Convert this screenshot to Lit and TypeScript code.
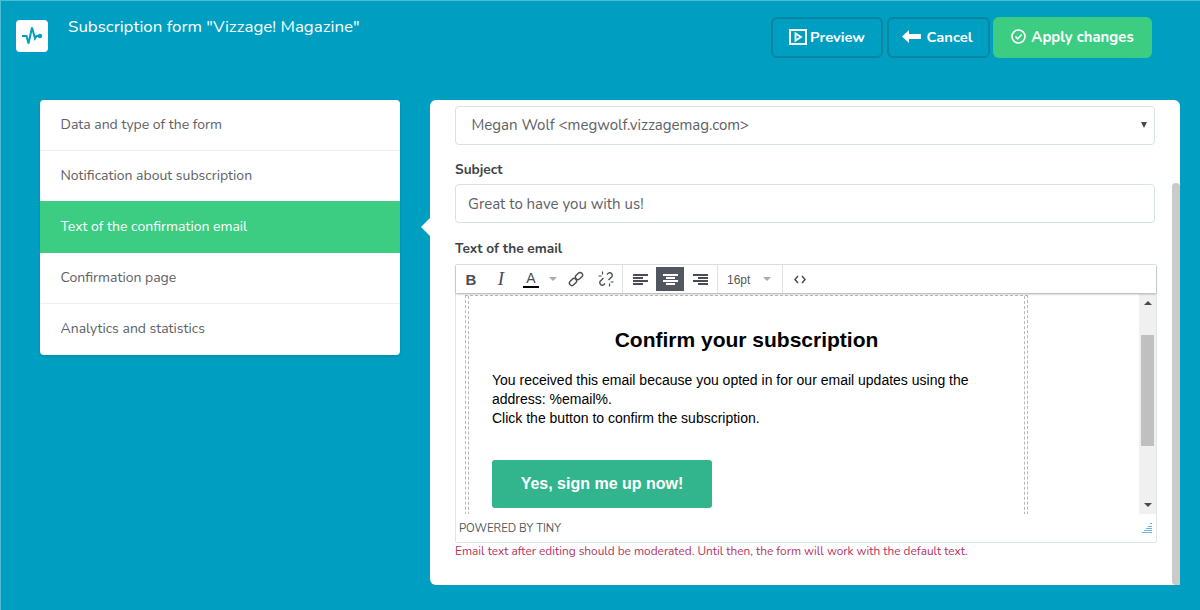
import { LitElement, html, css } from "lit";
import { customElement } from "lit/decorators.js";

@customElement("app-root")
export class AppRoot extends LitElement {
  static styles = css`
    :host { display: block; width: 1200px; height: 610px; overflow: hidden; font-family: "Nunito", "Lato", "Open Sans", sans-serif; }
    * { box-sizing: border-box; }
    .page { width: 1200px; height: 610px; background: #009fc2; display: flex; flex-direction: column; border-left: 1px solid #4fbcd5; border-top: 1px solid #4fbcd5; }
    .head { display: flex; height: 99px; padding: 16px 48px 0 15px; }
    .logo { width: 32px; height: 32px; margin-top: 3px; background: #fff; border-radius: 4px; display: flex; align-items: center; justify-content: center; }
    .title { margin-left: 20px; color: #fff; font-size: 16.9px; line-height: 20px; flex: 1; }
    .btns { display: flex; gap: 4px; }
    .btn { height: 41px; padding-bottom: 2px; border-radius: 6px; border: 2px solid #0a84a3; color: #fff; font-weight: 700; font-size: 14.7px; display: flex; align-items: center; justify-content: center; gap: 3px; }
    .preview { width: 112px; }
    .cancel { width: 103px; gap: 6px; padding-right: 3px; }
    .apply { width: 159px; border: 0; background: #3ccd82; gap: 5px; margin-left: -1px; font-size: 14.9px; }
    .main { display: flex; padding-left: 39px; gap: 30px; align-items: flex-start; }
    .side { width: 360px; background: #fff; border-radius: 4px; overflow: hidden; box-shadow: 0 1px 3px rgba(0,0,0,.15); }
    .item { height: 51px; padding: 0 21px 2px 20.500px; display: flex; align-items: center; font-size: 14px; color: #5d6166; border-bottom: 1px solid #eceeee; }
    .item:last-child { border-bottom: 0; height: 51px; }
    .item.on { background: #3ccd82; color: #fff; border-bottom: 0; height: 52px; margin-top: -1px; }
    .panel { position: relative; width: 750px; height: 485px; background: #fff; border-radius: 6px; padding: 6px 25px 0; }
    .arrow { position: absolute; left: -9px; top: 118px; width: 0; height: 0; border-style: solid; border-width: 9px 9px 9px 0; border-color: transparent #fff transparent transparent; }
    .bar { position: absolute; right: 0; top: 83px; bottom: 0; width: 8px; background: #cacaca; border-radius: 4px 4px 0 4px; }
    .field { height: 39px; width: 700px; border: 1px solid #d6e3e1; border-radius: 4px; display: flex; align-items: center; font-size: 15px; color: #5d6166; padding: 0 12px; }
    .select { padding-left: 15.500px; justify-content: space-between; padding-right: 7px; padding-bottom: 1px; }
    .caret { width: 0; height: 0; border-style: solid; border-width: 6px 3px 0; border-color: #4a4a4a transparent transparent; }
    label { display: block; font-size: 13.7px; font-weight: 700; color: #3f4347; line-height: 20px; }
    .l1 { margin-top: 15px; margin-bottom: 4px; }
    .l2 { margin-top: 16px; margin-bottom: 5px; }
    .editor { width: 702px; height: 279px; border: 1px solid #dde6e6; border-radius: 2px; display: flex; flex-direction: column; position: relative; }
    .tools { height: 28px; flex: none; display: flex; align-items: stretch; box-shadow: 0 1px 2px rgba(0,0,0,.35); background: #fff; position: relative; z-index: 1; color: #4a4d52; margin-bottom: 1px; }
    .grp { display: flex; align-items: center; border-right: 1px solid #dde2e2; }
    .g1 { width: 167px; }
    .g2 { width: 95px; padding-left: 3px; }
    .g3 { width: 65px; padding-left: 9px; }
    .g4 { border-right: 0; padding-left: 2px; }
    .t { width: 30px; height: 24px; display: flex; align-items: center; justify-content: center; font-family: "Liberation Sans", sans-serif; font-size: 14px; }
    .t.b { font-weight: 700; font-size: 15px; }
    .t.i { font-style: italic; font-family: "Liberation Serif", serif; font-size: 19px; }
    .t.on { background: #52565e; color: #fff; width: 28px; }
    .g2 .t { width: 28px; }
    .g2 .t + .t { margin-left: 2px; }
    .t.a { flex-direction: column; line-height: 13px; font-size: 14px; font-weight: 400; padding-top: 2px; }
    .t.a i { display: block; width: 16px; height: 2px; background: #000; margin-top: 1px; }
    .tri { width: 0; height: 0; border-style: solid; border-width: 4px 4px 0; border-color: #a9adb0 transparent transparent; }
    .tri1 { margin: 0 4px 0 3px; }
    .tri2 { margin-left: 13px; }
    .sz { font-family: "Liberation Sans", sans-serif; font-size: 12px; color: #53575c; width: 23px; padding-top: 1px; }
    .body { height: 220px; flex: none; display: flex; overflow: hidden; }
    .doc { width: 683px; padding-left: 9px; font-family: "Liberation Sans", sans-serif; overflow: hidden; }
    .outer { width: 563px; height: 260px; border: 1px dashed #b9b9b9; border-bottom: 0; padding: 0 2px; margin-top: 1px; }
    .inner { height: 100%; border-left: 1px dashed #b9b9b9; border-right: 1px dashed #b9b9b9; padding: 32px 23px 0; color: #000; }
    h1 { margin: 0; font-size: 21px; line-height: 24px; text-align: center; font-weight: 700; }
    p { margin: 19px 0 0; font-size: 14px; line-height: 19px; }
    .cta { margin-top: 32px; width: 220px; height: 48px; background: #32b58c; color: #fff; font-weight: 700; font-size: 16px; border-radius: 3px; display: flex; align-items: center; justify-content: center; }
    .sb { width: 17px; background: #f0f0f0; display: flex; flex-direction: column; align-items: center; padding-top: 7px; position: relative; }
    .up { width: 0; height: 0; border-style: solid; border-width: 0 4px 4px; border-color: transparent transparent #4a4a4a; }
    .down { width: 0; height: 0; border-style: solid; border-width: 4px 4px 0; border-color: #4a4a4a transparent transparent; position: absolute; bottom: 7px; }
    .thumb { position: absolute; top: 41px; left: 2px; width: 13px; height: 111px; background: #c0c0c0; }
    .status { flex: 1; display: flex; align-items: center; justify-content: space-between; padding: 0 3px; font-size: 11.3px; color: #53575c; }
    .err { font-size: 11.85px; line-height: 14px; margin-top: 1px; color: #b6325e; }
  `;

  render() {
    const items = ["Data and type of the form", "Notification about subscription", "Text of the confirmation email", "Confirmation page", "Analytics and statistics"];
    return html`<div class="page">
      <div class="head">
        <div class="logo"><svg width="24" height="22" viewBox="0 0 24 22" fill="none" stroke="#009fc2" stroke-width="2"><path d="M2 11h4.500l2 7.500 3.500-16 3 11 1.500-2.500h4"/><circle cx="20" cy="11" r="2.200" fill="#009fc2" stroke="none"/></svg></div>
        <div class="title">Subscription form "Vizzage! Magazine"</div>
        <div class="btns">
          <div class="btn preview"><svg width="18" height="16" viewBox="0 0 18 16" fill="none" stroke="#fff" stroke-width="2"><rect x="1" y="1" width="16" height="14"/><path d="M6.500 4.500v7l5.500-3.500z" stroke-width="1.800"/></svg>Preview</div>
          <div class="btn cancel"><svg width="19" height="13" viewBox="0 0 19 13" fill="#fff"><path d="M0 6.500 7 0v4h12v5H7v4z"/></svg>Cancel</div>
          <div class="btn apply"><svg width="15" height="15" viewBox="0 0 15 15" fill="none" stroke="#fff" stroke-width="1.600"><circle cx="7.500" cy="7.500" r="6.500"/><path d="M4.500 7.500l2.200 2.300 4-4.300"/></svg>Apply changes</div>
        </div>
      </div>
      <div class="main">
        <div class="side">${items.map((t, i) => html`<div class="item ${i === 2 ? "on" : ""}">${t}</div>`)}</div>
        <div class="panel">
          <div class="arrow"></div>
          <div class="bar"></div>
          <div class="field select"><span>Megan Wolf &lt;megwolf.vizzagemag.com&gt;</span><span class="caret"></span></div>
          <label class="l1">Subject</label>
          <div class="field">Great to have you with us!</div>
          <label class="l2">Text of the email</label>
          <div class="editor">
            <div class="tools">
              <div class="grp g1">
                <div class="t b">B</div><div class="t i">I</div>
                <div class="t a">A<i></i></div><div class="tri tri1"></div>
                <div class="t"><svg width="16" height="16" viewBox="0 0 16 16" fill="none" stroke="#4a4d52" stroke-width="1.400"><rect x="8.500" y="1" width="5" height="8" rx="2.500" transform="rotate(45 11 5)"/><rect x="2.500" y="7" width="5" height="8" rx="2.500" transform="rotate(45 5 11)"/></svg></div>
                <div class="t"><svg width="16" height="16" viewBox="0 0 16 16" fill="none" stroke="#4a4d52" stroke-width="1.400"><path d="M9 3.500l1.500-1.500a2.600 2.600 0 0 1 3.500 3.500L12.500 7l-2 2M7 12.500L5.500 14A2.600 2.600 0 0 1 2 10.500L3.500 9l2-2"/><path d="M4.500 0.500V3.500M0.500 5H3.500M11.500 15.500V12.500M15.500 11H12.500" stroke-width="1.200"/></svg></div>
              </div>
              <div class="grp g2">
                <div class="t"><svg width="15" height="11" viewBox="0 0 15 11" fill="#4a4d52"><path d="M0 0h15v2H0zM0 3h10v2H0zM0 6h15v2H0zM0 9h10v2H0z"/></svg></div>
                <div class="t on"><svg width="15" height="11" viewBox="0 0 15 11" fill="#fff"><path d="M0 0h15v2H0zM3 3h9v2H3zM0 6h15v2H0zM3 9h9v2H3z"/></svg></div>
                <div class="t"><svg width="15" height="11" viewBox="0 0 15 11" fill="#4a4d52"><path d="M0 0h15v2H0zM5 3h10v2H5zM0 6h15v2H0zM5 9h10v2H5z"/></svg></div>
              </div>
              <div class="grp g3"><span class="sz">16pt</span><div class="tri tri2"></div></div>
              <div class="grp g4"><div class="t"><svg width="12" height="9" viewBox="0 0 12 9" fill="none" stroke="#4a4d52" stroke-width="1.500"><path d="M4 1 1 4.500 4 8M8 1l3 3.500L8 8"/></svg></div></div>
            </div>
            <div class="body">
              <div class="doc"><div class="outer"><div class="inner">
                <h1>Confirm your subscription</h1>
                <p>You received this email because you opted in for our email updates using the address: %email%.<br>Click the button to confirm the subscription.</p>
                <div class="cta">Yes, sign me up now!</div>
              </div></div></div>
              <div class="sb"><div class="up"></div><div class="thumb"></div><div class="down"></div></div>
            </div>
            <div class="status"><span>POWERED BY TINY</span>
              <svg width="11" height="11" viewBox="0 0 11 11" fill="#6fb0dc"><path d="M8 0h2v1H8zM6 3h4v1H6zM4 5h6v1H4zM2 7h8v1H2zM0 9h10v1H0z"/></svg></div>
          </div>
          <div class="err">Email text after editing should be moderated. Until then, the form will work with the default text.</div>
        </div>
      </div>
    </div>`;
  }
}
